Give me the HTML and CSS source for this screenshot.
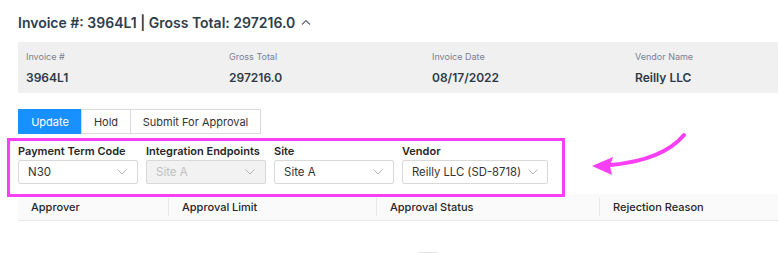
FILE: index.html
```html
<!DOCTYPE html>
<html lang="en">
<head>
    <meta charset="UTF-8">
    <meta name="viewport" content="width=device-width, initial-scale=1.0">
    <title>Invoice 3964L1</title>
    <link rel="stylesheet" href="styles.css">
</head>
<body>
    <div class="page">
        <h2 class="invoice-title">
            Invoice #: 3964L1 | Gross Total: 297216.0
            <svg class="caret" width="10" height="6" viewBox="0 0 10 6"><path d="M1 5.5 L5 1.5 L9 5.5" fill="none" stroke="#5a6675" stroke-width="1.1"/></svg>
        </h2>

        <div class="summary">
            <div class="summary-item">
                <div class="summary-label">Invoice #</div>
                <div class="summary-value">3964L1</div>
            </div>
            <div class="summary-item">
                <div class="summary-label">Gross Total</div>
                <div class="summary-value">297216.0</div>
            </div>
            <div class="summary-item">
                <div class="summary-label">Invoice Date</div>
                <div class="summary-value">08/17/2022</div>
            </div>
            <div class="summary-item">
                <div class="summary-label">Vendor Name</div>
                <div class="summary-value">Reilly LLC</div>
            </div>
        </div>

        <div class="actions">
            <button class="btn btn-primary">Update</button>
            <button class="btn btn-hold">Hold</button>
            <button class="btn btn-submit">Submit For Approval</button>
        </div>

        <div class="fields">
            <div class="field">
                <label>Payment Term Code</label>
                <div class="select">
                    <span>N30</span>
                    <svg class="chevron" width="10" height="6" viewBox="0 0 10 6"><path d="M0.5 0.5 L5 5 L9.5 0.5" fill="none" stroke="#b5b5b5" stroke-width="1"/></svg>
                </div>
            </div>
            <div class="field">
                <label>Integration Endpoints</label>
                <div class="select disabled">
                    <span>Site A</span>
                    <svg class="chevron" width="10" height="6" viewBox="0 0 10 6"><path d="M0.5 0.5 L5 5 L9.5 0.5" fill="none" stroke="#b5b5b5" stroke-width="1"/></svg>
                </div>
            </div>
            <div class="field">
                <label>Site</label>
                <div class="select">
                    <span>Site A</span>
                    <svg class="chevron" width="10" height="6" viewBox="0 0 10 6"><path d="M0.5 0.5 L5 5 L9.5 0.5" fill="none" stroke="#b5b5b5" stroke-width="1"/></svg>
                </div>
            </div>
            <div class="field">
                <label>Vendor</label>
                <div class="select select-auto">
                    <span>Reilly LLC (SD-8718)</span>
                    <svg class="chevron" width="10" height="6" viewBox="0 0 10 6"><path d="M0.5 0.5 L5 5 L9.5 0.5" fill="none" stroke="#b5b5b5" stroke-width="1"/></svg>
                </div>
            </div>
        </div>

        <div class="approvals">
            <div class="table-head">
                <div class="th col-approver">Approver</div>
                <div class="th col-limit">Approval Limit</div>
                <div class="th col-status">Approval Status</div>
                <div class="th col-reason">Rejection Reason</div>
            </div>
            <div class="table-empty">
                <div class="empty-icon"></div>
            </div>
        </div>
    </div>

    <!-- annotation -->
    <div class="highlight-box"></div>
    <svg class="highlight-arrow" width="110" height="50" viewBox="0 0 110 50">
        <path d="M99 5 Q78 30 26 35" fill="none" stroke="#f93ff5" stroke-width="4" stroke-linecap="round"/>
        <polygon points="7,36 28,27 25,36 27,45" fill="#f93ff5"/>
    </svg>
</body>
</html>
```

FILE: styles.css
```css
html, body {
    margin: 0;
    overflow: hidden;
    height: 253px;
}
body {
    font-family: Inter, "Noto Sans", sans-serif;
    color: #2c3a48;
    background: #fff;
}
.page {
    padding: 13px 0 0 18px;
    width: 820px;
}
.invoice-title {
    margin: 0;
    font-size: 14px;
    line-height: 20px;
    font-weight: 600;
    color: #2d3d4c;
    display: flex;
    align-items: center;
    gap: 6px;
}
.caret {
    margin-top: -2px;
}
.summary {
    margin-top: 9px;
    background: #f0f0f0;
    display: flex;
    padding: 8px 0 7px 8px;
}
.summary-item {
    width: 203px;
}
.summary-label {
    font-size: 9px;
    line-height: 14px;
    color: #778294;
}
.summary-value {
    margin-top: 6px;
    font-size: 12px;
    line-height: 16px;
    font-weight: 600;
    color: #2c3a48;
}
.actions {
    margin-top: 16px;
    display: flex;
}
.btn {
    font-family: inherit;
    font-size: 11px;
    height: 25px;
    padding: 0;
    border: 1px solid #d9d9d9;
    margin-left: -1px;
    background: #fff;
    color: #333;
    cursor: pointer;
}
.btn:first-child {
    margin-left: 0;
}
.btn-primary {
    background: #1890ff;
    border-color: #1890ff;
    color: #fff;
    width: 64px;
}
.btn-hold {
    width: 50px;
}
.btn-submit {
    width: 131px;
}
.fields {
    margin-top: 9px;
    display: flex;
    gap: 8px;
}
.field label {
    display: block;
    font-size: 11px;
    line-height: 16px;
    font-weight: 600;
    color: #262626;
    margin-bottom: 1px;
    white-space: nowrap;
}
.select {
    box-sizing: border-box;
    width: 120px;
    height: 24px;
    border: 1px solid #d9d9d9;
    border-radius: 2px;
    display: flex;
    align-items: center;
    justify-content: space-between;
    padding: 0 10px 0 9px;
    font-size: 11.5px;
    color: #333;
    white-space: nowrap;
}
.select-auto {
    width: auto;
    gap: 7px;
    padding: 0 9px;
    font-size: 11.3px;
}
.select.disabled {
    background: #f2f2f2;
    color: #bfbfbf;
}
.table-head {
    margin-top: 10px;
    display: flex;
    background: #fafafa;
    border-bottom: 1px solid #e8e8e8;
    height: 26px;
    align-items: center;
}
.th {
    font-size: 11px;
    color: #262626;
    font-weight: 500;
    padding-left: 13px;
    box-sizing: border-box;
    border-left: 1px solid #e8e8e8;
    line-height: 18px;
}
.col-approver {
    width: 150px;
    border-left: none;
}
.col-limit {
    width: 208px;
}
.col-status {
    width: 223px;
}
.col-reason {
    flex: 1;
}
.table-empty {
    display: flex;
    justify-content: center;
    padding-top: 31px;
}
.empty-icon {
    width: 20px;
    height: 12px;
    border: 1px solid #e4e4e4;
    border-radius: 2px;
}
.highlight-box {
    position: absolute;
    left: 7px;
    top: 138px;
    width: 558px;
    height: 59px;
    box-sizing: border-box;
    border: 3px solid #f93ff5;
}
.highlight-arrow {
    position: absolute;
    left: 585px;
    top: 130px;
}
```
